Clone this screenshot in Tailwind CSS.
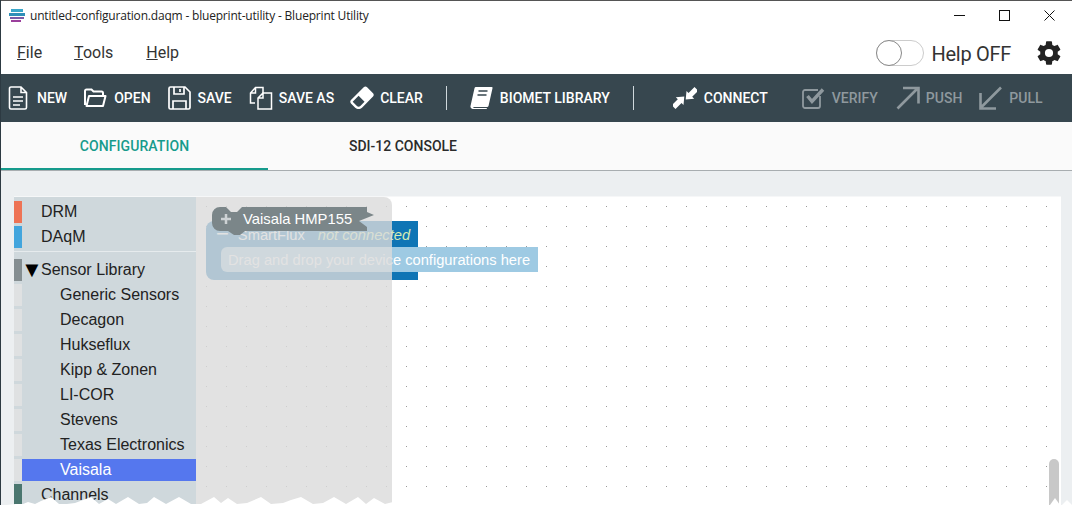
<!DOCTYPE html>
<html lang="en">
<head>
<meta charset="UTF-8">
<title>Blueprint Utility</title>
<script src="https://cdn.jsdelivr.net/npm/@tailwindcss/browser@4"></script>
</head>
<body class="bg-white">
<div class="w-[1072px] h-[505px] overflow-hidden flex flex-col relative border-l border-l-[#2d3a42] font-['Roboto',sans-serif]">

  <!-- title bar -->
  <div class="h-[30px] shrink-0 flex items-center border-t border-t-[#555] relative">
    <svg class="ml-[8px] w-[16px] h-[14px]" viewBox="0 0 16 14">
      <rect x="2" y="0" width="12" height="3" fill="#3aa6c9"/>
      <rect x="0" y="4" width="16" height="3" fill="#2f8fb8"/>
      <rect x="1" y="8" width="14" height="2" fill="#7a5ba8"/>
      <rect x="2" y="11" width="10" height="2" fill="#9b3f9c"/>
    </svg>
    <span class="ml-[5px] text-[12px] text-[#222] font-['Open_Sans',sans-serif] tracking-[-0.19px] whitespace-nowrap">untitled-configuration.daqm - blueprint-utility - Blueprint Utility</span>
    <div class="ml-auto flex items-center pr-[17px] gap-[34px]">
      <svg class="w-[11px] h-[11px]" viewBox="0 0 11 11"><path d="M0 5.5H11" stroke="#111" fill="none"/></svg>
      <svg class="w-[11px] h-[11px]" viewBox="0 0 11 11"><rect x="0.5" y="0.5" width="10" height="10" stroke="#111" fill="none"/></svg>
      <svg class="w-[11px] h-[11px]" viewBox="0 0 11 11"><path d="M0.5 0.5L10.5 10.5M10.5 0.5L0.5 10.5" stroke="#111" fill="none"/></svg>
    </div>
  </div>

  <!-- menu bar -->
  <div class="h-[44px] shrink-0 flex items-center text-[16px] text-[#333] relative">
    <span class="ml-[16px] mt-[2px]"><span class="underline">F</span>ile</span>
    <span class="ml-[32px] mt-[2px]"><span class="underline">T</span>ools</span>
    <span class="ml-[33px] mt-[2px]"><span class="underline">H</span>elp</span>
    <div class="ml-auto flex items-center mt-[2px]">
      <div class="w-[48px] h-[26px] rounded-full border border-[#ccc] bg-white">
        <div class="w-[26px] h-[26px] -mt-px -ml-px rounded-full border border-[#888] bg-white"></div>
      </div>
      <span class="ml-[8px] text-[20px] tracking-[-0.3px] text-[#333] leading-none mt-[1px]">Help OFF</span>
      <svg class="ml-[24px] mr-[9px] w-[28px] h-[28px]" viewBox="0 0 24 24" fill="#222"><path d="M12,15.5A3.5,3.5 0 0,1 8.5,12A3.5,3.5 0 0,1 12,8.5A3.5,3.5 0 0,1 15.5,12A3.5,3.5 0 0,1 12,15.5M19.43,12.97C19.47,12.65 19.5,12.33 19.5,12C19.5,11.67 19.47,11.34 19.43,11L21.54,9.37C21.73,9.22 21.78,8.95 21.66,8.73L19.66,5.27C19.54,5.05 19.27,4.96 19.05,5.05L16.56,6.05C16.04,5.66 15.5,5.32 14.87,5.07L14.5,2.42C14.46,2.18 14.25,2 14,2H10C9.75,2 9.54,2.18 9.5,2.42L9.13,5.07C8.5,5.32 7.96,5.66 7.44,6.05L4.95,5.05C4.73,4.96 4.46,5.05 4.34,5.27L2.34,8.73C2.21,8.95 2.27,9.22 2.46,9.37L4.57,11C4.53,11.34 4.5,11.67 4.5,12C4.5,12.33 4.53,12.65 4.57,12.97L2.46,14.63C2.27,14.78 2.21,15.05 2.34,15.27L4.34,18.73C4.46,18.95 4.73,19.03 4.95,18.95L7.44,17.94C7.96,18.34 8.5,18.68 9.13,18.93L9.5,21.58C9.54,21.82 9.75,22 10,22H14C14.25,22 14.46,21.82 14.5,21.58L14.87,18.93C15.5,18.67 16.04,18.34 16.56,17.94L19.05,18.95C19.27,19.03 19.54,18.95 19.66,18.73L21.66,15.27C21.78,15.05 21.73,14.78 21.54,14.63L19.43,12.97Z"/></svg>
    </div>
  </div>

  <!-- toolbar -->
  <div class="h-[48px] shrink-0 bg-[#37474f] flex items-center text-white text-[14px] font-medium whitespace-nowrap">
    <svg class="ml-[7px] w-[20px] h-[24px]" viewBox="0 0 20 24" fill="none" stroke="#fff" stroke-width="1.6"><path d="M1.5 2.5a1.5 1.5 0 0 1 1.5-1.5h10l5.5 5.5v15a1.5 1.5 0 0 1-1.5 1.5H3a1.5 1.5 0 0 1-1.5-1.5zM13 1v5.5h5.5M5 11h10M5 15h10M5 19h7"/></svg>
    <span class="ml-[9px]">NEW</span>
    <svg class="ml-[17px] w-[23px] h-[20px]" viewBox="0 0 23 20" fill="none" stroke="#fff" stroke-width="2"><path d="M1 17V3a1.5 1.5 0 0 1 1.5-1.5h5l2 2h8a1.5 1.5 0 0 1 1.5 1.5v2"/><path d="M5 8h16.500l-2.500 10H2.500z" stroke-linejoin="round"/></svg>
    <span class="ml-[7px]">OPEN</span>
    <svg class="ml-[17px] w-[23px] h-[24px]" viewBox="0 0 23 24" fill="none" stroke="#fff" stroke-width="1.7"><path d="M1 2.500A1.500 1.500 0 0 1 2.500 1H17l5 5v15.500a1.500 1.500 0 0 1-1.500 1.500h-18A1.500 1.500 0 0 1 1 21.500zM6 1v7h10V1M12 3v3M5 23v-8h13v8"/></svg>
    <span class="ml-[7px]">SAVE</span>
    <svg class="ml-[17px] w-[24px] h-[24px]" viewBox="0 0 24 24" fill="none" stroke="#fff" stroke-width="1.500"><path d="M6 17H1.500V7l5-5.500H14v6M1.500 7h5V1.500"/><path d="M9 12l5-5h8.500v16H9zM9 12h5V7"/></svg>
    <span class="ml-[6px]">SAVE AS</span>
    <svg class="ml-[16px] w-[24px] h-[24px]" viewBox="2 2.500 20 20" fill="#fff"><path d="M16.240,3.560L21.190,8.500C21.970,9.290 21.970,10.550 21.190,11.340L12,20.530C10.440,22.090 7.910,22.090 6.340,20.530L2.810,17C2.030,16.210 2.030,14.950 2.810,14.160L13.410,3.560C14.200,2.780 15.460,2.780 16.240,3.560M4.220,15.580L7.760,19.110C8.540,19.900 9.800,19.900 10.590,19.110L14.120,15.580L9.170,10.630L4.220,15.580Z"/></svg>
    <span class="ml-[6px]">CLEAR</span>
    <div class="ml-[23px] w-px h-[24px] bg-[#cfd8dc]"></div>
    <svg class="ml-[23px] w-[23px] h-[24px]" viewBox="0 0 23 24" fill="#fff"><path d="M6 1h15.500a1 1 0 0 1 1 1.300L18.500 20a1.500 1.500 0 0 1-1.500 1H4.500c-1 0-1.500.5-1.200 1.100H16.500c.5 0 .8.900 0 .900H3a2.500 2.500 0 0 1-2.500-3L4.500 2.200A1.500 1.500 0 0 1 6 1z"/><path d="M8.500 5h9M7.500 9h9" stroke="#37474f" stroke-width="1.600"/></svg>
    <span class="ml-[7px]">BIOMET LIBRARY</span>
    <div class="ml-[23px] w-px h-[24px] bg-[#cfd8dc]"></div>
    <svg class="ml-[39px] w-[24px] h-[24px]" viewBox="0 0 24 24" fill="#fff"><path d="M21.500 1L15.500 7l-2-2-.8 8.500 8.500-.8-2-2 6-6z"/><path d="M2.500 23l6-6 2 2 .8-8.500-8.500.8 2 2-6 6z"/></svg>
    <span class="ml-[7px]">CONNECT</span>
    <div class="flex items-center text-[#8f999e]">
      <svg class="ml-[34px] w-[23px] h-[23px]" viewBox="0 0 23 23" fill="none" stroke="#8f999e"><path d="M18 9v10a2 2 0 0 1-2 2H3a2 2 0 0 1-2-2V5a2 2 0 0 1 2-2h13" stroke-width="1.800"/><path d="M5.500 9l4.500 5.500L21 2.500" stroke-width="3.400"/></svg>
      <span class="ml-[7px]">VERIFY</span>
      <svg class="ml-[18px] w-[24px] h-[24px]" viewBox="0 0 24 24" fill="none" stroke="#8f999e" stroke-width="2.600"><path d="M1.500 22.500L22 2M7 2h15.500v15.500"/></svg>
      <span class="ml-[6px]">PUSH</span>
      <svg class="ml-[17px] w-[23px] h-[24px]" viewBox="0 0 23 24" fill="none" stroke="#8f999e" stroke-width="2.600"><path d="M22 1.500L1.500 22M1.500 7v15.500H17"/></svg>
      <span class="ml-[7px]">PULL</span>
    </div>
  </div>

  <!-- tabs -->
  <div class="h-[49px] shrink-0 bg-[#fafafa] flex text-[14px] font-medium border-b border-b-[#a8adb0]">
    <div class="w-[267px] flex items-center justify-center text-[#169b8c] tracking-[0.1px] border-b-[2px] border-b-[#169b8c] pt-[2px]">CONFIGURATION</div>
    <div class="w-[270px] flex items-center justify-center text-[#2b2b2b]">SDI-12 CONSOLE</div>
  </div>

  <!-- workspace -->
  <div class="flex-1 min-h-0 bg-[#eceff1] pt-[25px] pl-[13px] pr-[11px]">
    <div class="h-full relative bg-white border-t border-t-[#f6f7f8] overflow-hidden font-['Liberation_Sans',sans-serif] text-[16px]">

      <!-- dotted grid -->
      <svg class="absolute inset-0 w-full h-full">
        <defs><pattern id="grid" x="12" y="9" width="20" height="20" patternUnits="userSpaceOnUse"><rect width="1" height="1" fill="#9a9a9a"/></pattern></defs>
        <rect width="100%" height="100%" fill="url(#grid)"/>
      </svg>

      <!-- block on the canvas -->
      <div class="absolute left-[192px] top-[24px] w-[212px] h-[59px] rounded-l-[8px] bg-[#0f75b5] flex items-start whitespace-nowrap text-[14.7px]">
        <span class="ml-[10px] mt-[1px] text-white text-[22px] leading-[24px]">−</span>
        <span class="ml-[9px] mt-[3px] text-white">SmartFlux</span>
        <span class="ml-[13px] mt-[3px] italic text-[#d6ecb4]">not connected</span>
      </div>
      <div class="absolute left-[207px] top-[50px] w-[317px] h-[25px] rounded-l-[6px] bg-[#9ecae3] text-white text-[14.7px] pl-[7px] pt-[1px] leading-[25px] whitespace-nowrap">Drag and drop your device configurations here</div>

      <!-- flyout -->
      <div class="absolute left-[182px] top-0 w-[196px] h-full rounded-tr-[8px] bg-[#dbdbdb]/80"></div>

      <!-- toolbox -->
      <div class="absolute left-0 top-0 w-[182px] h-full bg-[#cfd8dc] pt-[4px] text-[#222]">
        <div class="flex h-[22px] mb-[3px] items-center"><div class="w-[8px] h-full bg-[#ee7355]"></div><span class="ml-[19px]">DRM</span></div>
        <div class="flex h-[22px] mb-[3px] items-center"><div class="w-[8px] h-full bg-[#42a5dd]"></div><span class="ml-[19px]">DAqM</span></div>
        <div class="h-px mt-[3px] mb-[7px] bg-[#e6ebed]"></div>
        <div class="flex h-[22px] mb-[3px] items-center"><div class="w-[8px] h-full bg-[#858e91]"></div><span class="ml-[-1px] w-[20px] text-[22px] leading-none text-black">▼</span><span>Sensor Library</span></div>
        <div class="flex h-[22px] mb-[3px] items-center"><div class="w-[8px] h-full bg-[#dfe1e2]"></div><span class="ml-[38px]">Generic Sensors</span></div>
        <div class="flex h-[22px] mb-[3px] items-center"><div class="w-[8px] h-full bg-[#dfe1e2]"></div><span class="ml-[38px]">Decagon</span></div>
        <div class="flex h-[22px] mb-[3px] items-center"><div class="w-[8px] h-full bg-[#dfe1e2]"></div><span class="ml-[38px]">Hukseflux</span></div>
        <div class="flex h-[22px] mb-[3px] items-center"><div class="w-[8px] h-full bg-[#dfe1e2]"></div><span class="ml-[38px]">Kipp &amp; Zonen</span></div>
        <div class="flex h-[22px] mb-[3px] items-center"><div class="w-[8px] h-full bg-[#dfe1e2]"></div><span class="ml-[38px]">LI-COR</span></div>
        <div class="flex h-[22px] mb-[3px] items-center"><div class="w-[8px] h-full bg-[#dfe1e2]"></div><span class="ml-[38px]">Stevens</span></div>
        <div class="flex h-[22px] mb-[3px] items-center"><div class="w-[8px] h-full bg-[#dfe1e2]"></div><span class="ml-[38px]">Texas Electronics</span></div>
        <div class="flex h-[22px] mb-[3px] items-center"><div class="w-[8px] h-full bg-[#dfe1e2]"></div><span class="flex-1 h-full flex items-center pl-[38px] bg-[#5577ee] text-white">Vaisala</span></div>
        <div class="flex h-[22px] mb-[3px] items-center"><div class="w-[8px] h-full bg-[#4a766f]"></div><span class="ml-[19px]">Channels</span></div>
      </div>

      <!-- block being dragged -->
      <svg class="absolute left-[198px] top-[10px] w-[164px] h-[30px]" viewBox="0 0 164 30">
        <path d="M8 0H14L19 5H25L30 0H155V5L162 8L147 14L155 20V24H33L28 28H22L16 24H8A8 8 0 0 1 0 16V8A8 8 0 0 1 8 0Z" fill="#7b8689"/>
        <path d="M9 12H19M14 7V17" stroke="#cdd2d4" stroke-width="2.500" fill="none"/>
      </svg>
      <span class="absolute left-[229px] top-[13px] text-white text-[14.8px] whitespace-nowrap leading-[18px]">Vaisala HMP155</span>

      <!-- scrollbar -->
      <div class="absolute left-[1035px] top-[262px] w-[10px] h-[60px] rounded-t-[5px] bg-[#c8c8c8]"></div>
    </div>
  </div>

  <!-- torn lower edge of the capture -->
  <svg class="absolute left-0 bottom-0 w-[1072px] h-[9px]" viewBox="0 0 1072 9">
    <path fill="#fff" d="M6 9L14 8L22 8L27 6L34 8L40 5L50 1L58 8L66 8L74 7L82 4L90 1L98 8L107 3L115 8L127 1L138 8L146 7L153 1L165 8L178 1L190 8L200 8L213 1L220 7L227 2L236 8L246 7L260 1L270 8L282 7L290 4L300 1L312 8L322 7L333 1L345 8L357 1L365 8L373 2L384 8L392 6V9Z"/>
    <path fill="#fff" d="M1049 9L1054 2L1059 9Z"/>
    <path fill="#fff" d="M1061 9L1066 4L1071 9Z"/>
  </svg>
</div>
</body>
</html>
